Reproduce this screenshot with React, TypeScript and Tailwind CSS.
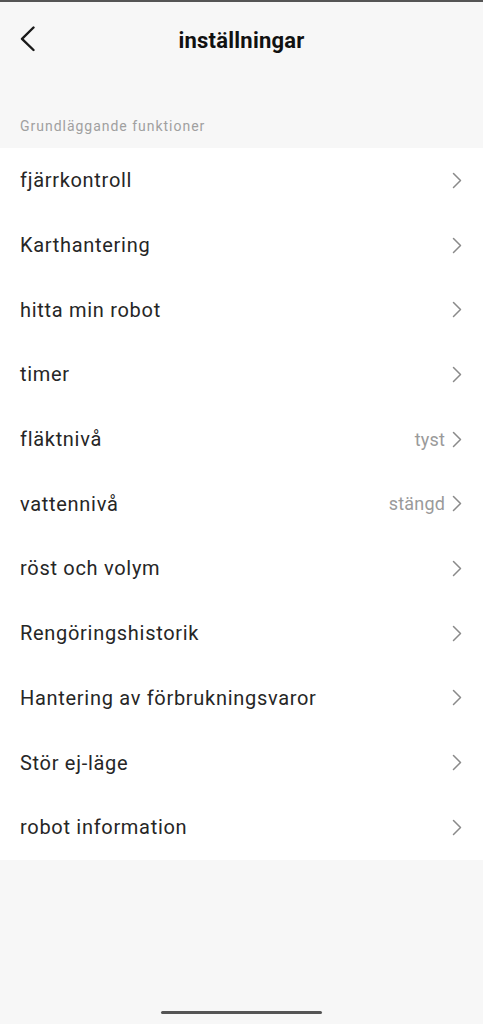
const rows: { label: string; value?: string }[] = [
  { label: "fjärrkontroll" },
  { label: "Karthantering" },
  { label: "hitta min robot" },
  { label: "timer" },
  { label: "fläktnivå", value: "tyst" },
  { label: "vattennivå", value: "stängd" },
  { label: "röst och volym" },
  { label: "Rengöringshistorik" },
  { label: "Hantering av förbrukningsvaror" },
  { label: "Stör ej-läge" },
  { label: "robot information" },
];

const Chevron = () => (
  <svg width="10" height="17" viewBox="0 0 10 17" fill="none" className="shrink-0">
    <path d="M1.5 1.5 L8.5 8.5 L1.5 15.5" stroke="#8a8a8a" strokeWidth="1.5" strokeLinecap="round" strokeLinejoin="round" />
  </svg>
);

export default function App() {
  return (
    <div className="relative flex h-[1024px] w-[483px] flex-col bg-[#f7f7f7] font-['Roboto',sans-serif]">
      <div className="h-[2px] w-full bg-[#555]" />
      {/* header */}
      <div className="relative flex h-[76px] items-center justify-center">
        <svg width="16" height="26" viewBox="0 0 16 26" fill="none" className="absolute left-[20px] top-[24px]">
          <path d="M13.5 1.5 L2 12.8 L13.5 24" stroke="#1a1a1a" strokeWidth="2.4" strokeLinecap="round" strokeLinejoin="round" />
        </svg>
        <div className="text-[22px] font-bold tracking-[0.01em] text-[#111]">inställningar</div>
      </div>
      <div className="flex h-[70px] items-center px-5 pt-[26px] text-[14px] tracking-[0.07em] text-[#a0a0a0]">
        Grundläggande funktioner
      </div>
      <div className="bg-white">
        {rows.map((r) => (
          <div key={r.label} className="flex h-[64.7px] items-center justify-between pl-5 pr-[21px]">
            <span className="text-[20px] tracking-[0.035em] text-[#262626]">{r.label}</span>
            <div className="flex items-center gap-[7px]">
              {r.value && <span className="text-[18px] tracking-[0.01em] text-[#9a9a9a]">{r.value}</span>}
              <Chevron />
            </div>
          </div>
        ))}
      </div>
      <div className="flex-1" />
      <div className="flex h-[24px] items-end justify-center pb-[10px]">
        <div className="h-[3px] w-[161px] rounded-full bg-[#555]" />
      </div>
    </div>
  );
}
